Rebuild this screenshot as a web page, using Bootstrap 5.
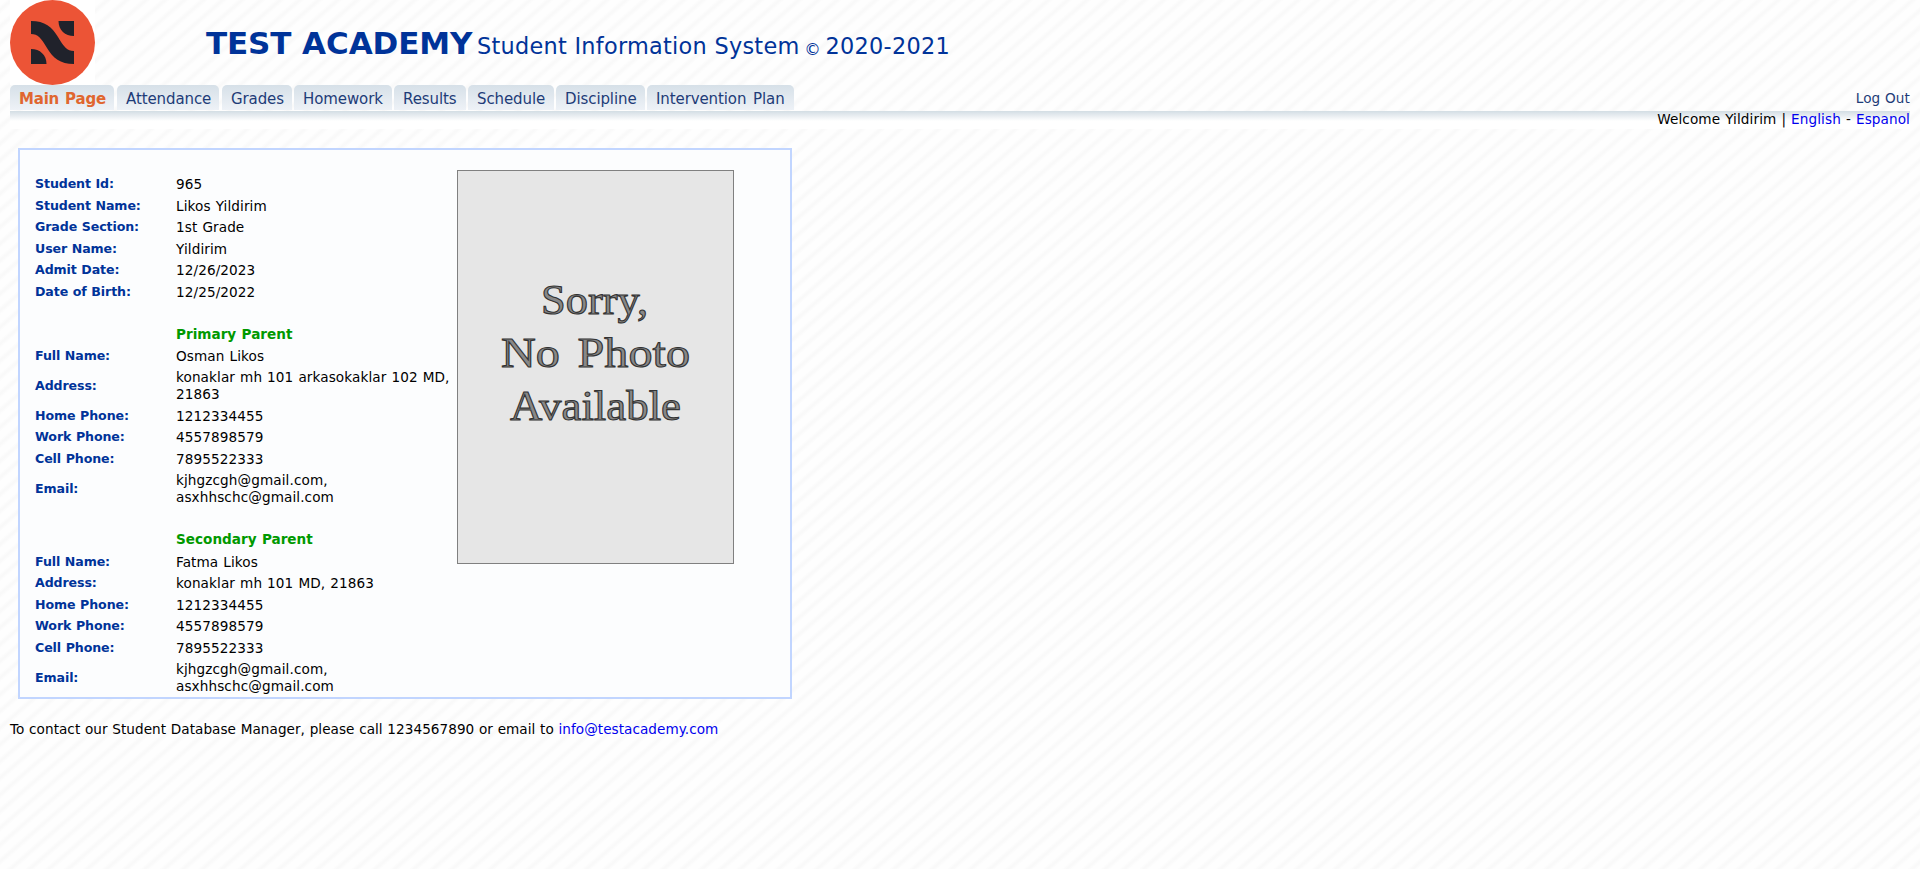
<!DOCTYPE html>
<html lang="en">
<head>
<meta charset="utf-8">
<title>Student Information System</title>
<link href="https://cdn.jsdelivr.net/npm/bootstrap@5.3.0/dist/css/bootstrap.min.css" rel="stylesheet">
<style>
body{font-family:Verdana,"DejaVu Sans",sans-serif;font-size:13.6px;line-height:17px;color:#000;padding:0 10px;min-height:100vh;letter-spacing:.04px;word-spacing:.35px;
background:repeating-linear-gradient(139deg,#fefefe 0 4px,#f9f9f9 7px 8px,#fefefe 11px 12.6px)}
a{text-decoration:none;color:#00e}
.masthead{height:85px;color:#039}
.logo-box{width:85px;height:85px;background:#fff}
.brand{margin-left:111px;padding-top:22px;line-height:42px;white-space:nowrap}
.school{font-size:31px;font-weight:700;letter-spacing:-.1px;word-spacing:0}
.sys{font-size:22.4px;letter-spacing:.27px;word-spacing:0}
.copy{font-size:16.5px;position:relative;top:1px}
.tab{height:25px;padding:0 9px;border-radius:5px 5px 0 0;background:linear-gradient(#d6e0e8,#eef2f7);color:#1e3c78;font-size:15px;line-height:28px;white-space:nowrap;letter-spacing:-.1px;word-spacing:2px}
.tab.active{color:#e0662f;font-weight:700;letter-spacing:-.2px;word-spacing:1px}
.band{height:18px;background:linear-gradient(#d3dde4,#fff 10px)}
.logout{color:#1e3c78;line-height:26px;letter-spacing:.1px}
.welcome,.val{letter-spacing:.1px;word-spacing:.6px}
.panel{margin:19px 0 0 8px;width:774px;height:551px;border:2px solid #c1d5ff;background:#fcfdfe;padding:20px 0 0 15px}
.info{width:422px;padding-top:3px}
.line{padding:2.24px 0;min-height:21.48px}
.lbl{width:141px;font-size:12.6px;font-weight:700;color:#039;letter-spacing:-.1px}
.val{width:278px;white-space:nowrap;padding-top:1px;margin-bottom:-1px}
.parent{color:#090;font-weight:700;letter-spacing:0}
.photo{width:277px;height:394px;border:1px solid gray;background:#e6e6e6}
.contact{margin-top:22px}
</style>
</head>
<body>
<header class="masthead d-flex">
<div class="logo-box"><svg class="d-block" width="85" height="85" viewBox="0 0 85 85"><circle cx="42.5" cy="42.5" r="42.5" fill="#ec5436"/><path fill="#20222b" d="M21 21C35 21 42 27 48 37C54 47 57 51 64 51V64C50 64 43 58 37 48C31 38 28 34 21 34ZM48.500 21H64V36C55 36 48.500 30 48.500 21ZM21 49C30 49 36.500 55 36.500 64H21Z"/></svg></div>
<div class="brand"><span class="school">TEST ACADEMY</span> <span class="sys">Student Information System</span> <span class="copy">©</span> <span class="sys">2020-2021</span></div>
</header>
<nav class="d-flex">
<a class="tab active" style="width:104px;margin-right:3px" href="#">Main Page</a>
<a class="tab" style="width:102px;margin-right:3px" href="#">Attendance</a>
<a class="tab" style="width:70px;margin-right:2px" href="#">Grades</a>
<a class="tab" style="width:98px;margin-right:2px" href="#">Homework</a>
<a class="tab" style="width:72px;margin-right:2px" href="#">Results</a>
<a class="tab" style="width:86px;margin-right:2px" href="#">Schedule</a>
<a class="tab" style="width:89px;margin-right:2px" href="#">Discipline</a>
<a class="tab" style="width:147px" href="#">Intervention Plan</a>
<a class="logout ms-auto" href="#">Log Out</a>
</nav>
<div class="band text-end"><span class="welcome">Welcome Yildirim | <a href="#">English</a> - <a href="#">Espanol</a></span></div>
<main class="panel d-flex align-items-start">
<div class="info">
<div class="line d-flex align-items-center"><div class="lbl">Student Id:</div><div class="val">965</div></div>
<div class="line d-flex align-items-center"><div class="lbl">Student Name:</div><div class="val">Likos Yildirim</div></div>
<div class="line d-flex align-items-center"><div class="lbl">Grade Section:</div><div class="val">1st Grade</div></div>
<div class="line d-flex align-items-center"><div class="lbl">User Name:</div><div class="val">Yildirim</div></div>
<div class="line d-flex align-items-center"><div class="lbl">Admit Date:</div><div class="val">12/26/2023</div></div>
<div class="line d-flex align-items-center"><div class="lbl">Date of Birth:</div><div class="val">12/25/2022</div></div>
<div class="line"></div>
<div class="line d-flex"><div class="lbl"></div><div class="val parent pt-0 mb-0">Primary Parent</div></div>
<div class="line d-flex align-items-center"><div class="lbl">Full Name:</div><div class="val">Osman Likos</div></div>
<div class="line d-flex align-items-center"><div class="lbl">Address:</div><div class="val">konaklar mh 101 arkasokaklar 102 MD,<br>21863</div></div>
<div class="line d-flex align-items-center"><div class="lbl">Home Phone:</div><div class="val">1212334455</div></div>
<div class="line d-flex align-items-center"><div class="lbl">Work Phone:</div><div class="val">4557898579</div></div>
<div class="line d-flex align-items-center"><div class="lbl">Cell Phone:</div><div class="val">7895522333</div></div>
<div class="line d-flex align-items-center"><div class="lbl">Email:</div><div class="val">kjhgzcgh@gmail.com,<br>asxhhschc@gmail.com</div></div>
<div class="line"></div>
<div class="line d-flex"><div class="lbl"></div><div class="val parent pt-0 mb-0">Secondary Parent</div></div>
<div class="line d-flex align-items-center"><div class="lbl">Full Name:</div><div class="val">Fatma Likos</div></div>
<div class="line d-flex align-items-center"><div class="lbl">Address:</div><div class="val">konaklar mh 101 MD, 21863</div></div>
<div class="line d-flex align-items-center"><div class="lbl">Home Phone:</div><div class="val">1212334455</div></div>
<div class="line d-flex align-items-center"><div class="lbl">Work Phone:</div><div class="val">4557898579</div></div>
<div class="line d-flex align-items-center"><div class="lbl">Cell Phone:</div><div class="val">7895522333</div></div>
<div class="line d-flex align-items-center"><div class="lbl">Email:</div><div class="val">kjhgzcgh@gmail.com,<br>asxhhschc@gmail.com</div></div>
</div>
<div class="photo"><svg class="d-block" width="275" height="392" font-family="Liberation Serif" font-size="43" fill="#888" stroke="#333" stroke-width="1.100" letter-spacing="0" word-spacing="5"><text x="83" y="143" textLength="107" lengthAdjust="spacingAndGlyphs">Sorry,</text><text x="43" y="196" textLength="189" lengthAdjust="spacingAndGlyphs">No Photo</text><text x="52" y="249" textLength="171" lengthAdjust="spacingAndGlyphs">Available</text></svg></div>
</main>
<footer class="contact">To contact our Student Database Manager, please call 1234567890 or email to <a href="#">info@testacademy.com</a></footer>
<script src="https://cdn.jsdelivr.net/npm/bootstrap@5.3.0/dist/js/bootstrap.bundle.min.js"></script>
</body>
</html>
